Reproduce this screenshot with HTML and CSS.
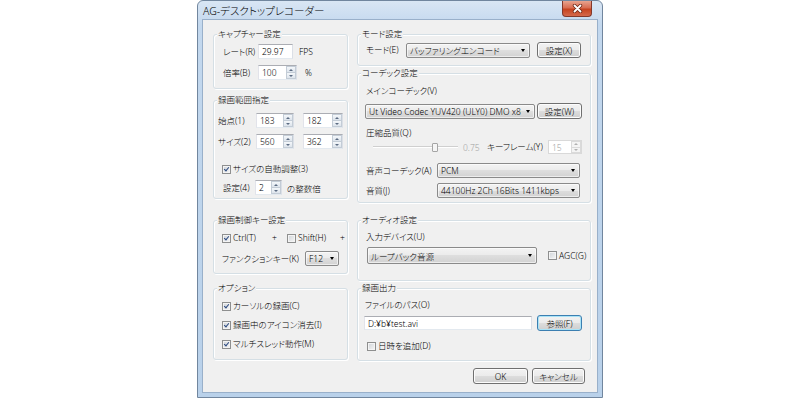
FILE: index.html
```html
<!DOCTYPE html>
<html lang="ja">
  <head>
    <meta charset="UTF-8">
    <title>AG-デスクトップレコーダー</title>
    <link rel="stylesheet" href="styles.css">
  </head>
  <body>
    <div class="page">
      <div class="window">
        <div class="titlebar">
          <span class="title">AG-デスクトップレコーダー</span>
          <span class="close-btn">
            <svg width="11" height="9" viewBox="0 0 11 9">
              <path d="M2.5 1.5 L8.5 7.5 M8.5 1.5 L2.5 7.5" stroke="#6b2414" stroke-width="3.4" stroke-linecap="round"/>
              <path d="M2.5 1.5 L8.5 7.5 M8.5 1.5 L2.5 7.5" stroke="#fff" stroke-width="1.9" stroke-linecap="round"/>
            </svg>
          </span>
        </div>

        <div class="client">
          <div class="columns">
            <!-- left column -->
            <div class="col col-left">
              <div class="group g-capture">
                <div class="group-title">キャプチャー設定</div>
                <div class="row cap-rate">
                  <span class="lbl cap-lbl">レート(R)</span>
                  <span class="textbox tb-rate">29.97</span>
                  <span class="unit-fps">FPS</span>
                </div>
                <div class="row cap-scale">
                  <span class="lbl cap-lbl">倍率(B)</span>
                  <span class="spin spin-scale"><span class="spin-val">100</span><span class="spin-btns"><i class="up"></i><i class="dn"></i></span></span>
                  <span class="unit-pct">%</span>
                </div>
              </div>

              <div class="group g-range">
                <div class="group-title">録画範囲指定</div>
                <div class="row rng-start">
                  <span class="lbl rng-lbl">始点(1)</span>
                  <span class="spin spin-x"><span class="spin-val">183</span><span class="spin-btns"><i class="up"></i><i class="dn"></i></span></span>
                  <span class="spin spin-y"><span class="spin-val">182</span><span class="spin-btns"><i class="up"></i><i class="dn"></i></span></span>
                </div>
                <div class="row rng-size">
                  <span class="lbl rng-lbl">サイズ(2)</span>
                  <span class="spin spin-x"><span class="spin-val">560</span><span class="spin-btns"><i class="up"></i><i class="dn"></i></span></span>
                  <span class="spin spin-y"><span class="spin-val">362</span><span class="spin-btns"><i class="up"></i><i class="dn"></i></span></span>
                </div>
                <div class="row check-row rng-auto">
                  <span class="check on"></span>
                  <span class="check-lbl">サイズの自動調整(3)</span>
                </div>
                <div class="row rng-mult">
                  <span class="lbl mult-lbl">設定(4)</span>
                  <span class="spin spin-mult"><span class="spin-val">2</span><span class="spin-btns"><i class="up"></i><i class="dn"></i></span></span>
                  <span class="mult-suffix">の整数倍</span>
                </div>
              </div>

              <div class="group g-keys">
                <div class="group-title">録画制御キー設定</div>
                <div class="row check-row key-mods">
                  <span class="key-item key-ctrl"><span class="check on"></span><span class="check-lbl">Ctrl(T)</span></span>
                  <span class="plus">+</span>
                  <span class="key-item key-shift"><span class="check"></span><span class="check-lbl">Shift(H)</span></span>
                  <span class="plus">+</span>
                </div>
                <div class="row key-func">
                  <span class="lbl func-lbl">ファンクションキー(K)</span>
                  <span class="combo combo-func"><span class="combo-text">F12</span><span class="combo-arrow"></span></span>
                </div>
              </div>

              <div class="group g-option">
                <div class="group-title">オプション</div>
                <div class="row check-row opt-row"><span class="check on"></span><span class="check-lbl">カーソルの録画(C)</span></div>
                <div class="row check-row opt-row"><span class="check on"></span><span class="check-lbl">録画中のアイコン消去(I)</span></div>
                <div class="row check-row opt-row"><span class="check on"></span><span class="check-lbl">マルチスレッド動作(M)</span></div>
              </div>
            </div>

            <!-- right column -->
            <div class="col col-right">
              <div class="group g-mode">
                <div class="group-title">モード設定</div>
                <div class="row mode-row">
                  <span class="lbl mode-lbl">モード(E)</span>
                  <span class="combo combo-mode"><span class="combo-text">バッファリングエンコード</span><span class="combo-arrow"></span></span>
                  <span class="btn btn-mode">設定(X)</span>
                </div>
              </div>

              <div class="group g-codec">
                <div class="group-title">コーデック設定</div>
                <div class="row text-row codec-main-lbl">メインコーデック(V)</div>
                <div class="row codec-main">
                  <span class="combo combo-main"><span class="combo-text">Ut Video Codec YUV420 (ULY0) DMO x86</span><span class="combo-arrow"></span></span>
                  <span class="btn btn-codec">設定(W)</span>
                </div>
                <div class="row text-row codec-q-lbl">圧縮品質(Q)</div>
                <div class="row codec-q">
                  <span class="slider"><span class="slider-track"></span><span class="slider-thumb"></span></span>
                  <span class="slider-val">0.75</span>
                  <span class="lbl kf-lbl">キーフレーム(Y)</span>
                  <span class="spin spin-kf disabled"><span class="spin-val">15</span><span class="spin-btns"><i class="up"></i><i class="dn"></i></span></span>
                </div>
                <div class="row codec-audio">
                  <span class="lbl ac-lbl">音声コーデック(A)</span>
                  <span class="combo combo-audio"><span class="combo-text">PCM</span><span class="combo-arrow"></span></span>
                </div>
                <div class="row codec-quality">
                  <span class="lbl ac-lbl">音質(J)</span>
                  <span class="combo combo-audio"><span class="combo-text">44100Hz 2Ch 16Bits 1411kbps</span><span class="combo-arrow"></span></span>
                </div>
              </div>

              <div class="group g-audio">
                <div class="group-title">オーディオ設定</div>
                <div class="row text-row audio-lbl">入力デバイス(U)</div>
                <div class="row audio-dev">
                  <span class="combo combo-dev"><span class="combo-text">ループバック音源</span><span class="combo-arrow"></span></span>
                  <span class="check agc-check"></span>
                  <span class="check-lbl">AGC(G)</span>
                </div>
              </div>

              <div class="group g-output">
                <div class="group-title">録画出力</div>
                <div class="row text-row out-lbl">ファイルのパス(O)</div>
                <div class="row out-path">
                  <span class="textbox tb-path">D:¥b¥test.avi</span>
                  <span class="btn btn-browse focused">参照(F)</span>
                </div>
                <div class="row check-row out-date">
                  <span class="check"></span>
                  <span class="check-lbl">日時を追加(D)</span>
                </div>
              </div>
            </div>
          </div>

          <div class="footer">
            <span class="btn btn-ok">OK</span>
            <span class="btn btn-cancel">キャンセル</span>
          </div>
        </div>
      </div>
    </div>
  </body>
</html>
```

FILE: styles.css
```css
* {
  box-sizing: border-box;
}

body {
  margin: 0;
  background: #fff;
  color: #000;
  font-family: "Noto Sans", "Noto Sans CJK JP", sans-serif;
  font-size: 8.5px;
  font-weight: 300;
  font-feature-settings: "palt";
}

.page {
  width: 800px;
  height: 400px;
  display: flex;
  justify-content: center;
}

/* window frame */
.window {
  width: 406px;
  height: 398px;
  display: flex;
  flex-direction: column;
  padding: 0 5px 5px;
  border: 1px solid #71869e;
  border-radius: 6px 6px 0 0;
  background: linear-gradient(#d9e6f4, #c3d8ee 24px, #b9d1ea);
}
.titlebar {
  flex: none;
  height: 19px;
  display: flex;
  align-items: flex-start;
}
.title {
  margin-top: 4px;
  font-size: 10.5px;
  line-height: 13px;
  white-space: nowrap;
}
.close-btn {
  margin-left: auto;
  margin-right: 5px;
  width: 30px;
  height: 16px;
  display: flex;
  align-items: center;
  justify-content: center;
  border: 1px solid #83382a;
  border-top: none;
  border-radius: 0 0 4px 4px;
  background: linear-gradient(#e8a48f, #d86d52 45%, #c6431f 55%, #d4694c);
}
.client {
  flex: 1;
  background: #f0f0f0;
  box-shadow: 0 0 0 1px #99b0ca;
  padding: 14px 6px 0 10px;
}

.columns {
  display: flex;
  gap: 9px;
}
.col {
  display: flex;
  flex-direction: column;
}
.col-left {
  width: 135px;
}
.col-right {
  width: 234px;
}

/* group boxes */
.group {
  border: 1px solid #d5dfe5;
  border-radius: 3px;
  box-shadow: inset 1px 1px 0 #fff, 1px 1px 0 #fff;
}
.group-title {
  width: fit-content;
  height: 12px;
  margin: -7px 0 0 3px;
  padding: 0 1px;
  background: #f0f0f0;
  line-height: 12px;
  white-space: nowrap;
}
.g-capture { height: 55px; }
.g-range { height: 99px; margin-top: 11px; }
.g-keys { height: 54px; margin-top: 21px; }
.g-option { height: 72px; margin-top: 14px; }
.g-mode { height: 32px; }
.g-codec { height: 130px; margin-top: 7px; }
.g-audio { height: 61px; margin-top: 17px; }
.g-output { height: 73px; margin-top: 7px; }

.row {
  display: flex;
  align-items: center;
  white-space: nowrap;
}
.row > * {
  flex: none;
}
.text-row,
.check-row {
  height: 12px;
  line-height: 12px;
}
.lbl {
  line-height: 12px;
}

/* controls */
.textbox {
  display: flex;
  align-items: center;
  height: 15px;
  padding-left: 3px;
  background: #fff;
  border: 1px solid;
  border-color: #abadb3 #dbdfe6 #e3e9ef #e2e3ea;
}

.spin {
  display: flex;
  height: 15px;
  background: #fff;
  border: 1px solid;
  border-color: #abadb3 #dbdfe6 #e3e9ef #e2e3ea;
}
.spin-val {
  flex: 1;
  display: flex;
  align-items: center;
  padding-left: 3px;
}
.spin-btns {
  width: 10px;
  display: flex;
  flex-direction: column;
}
.spin-btns i {
  flex: 1;
  display: flex;
  align-items: center;
  justify-content: center;
  border: 1px solid #c3ccd6;
  background: linear-gradient(#f4f7fa, #dde4ec);
}
.spin-btns i + i {
  border-top: none;
}
.spin-btns i::before {
  content: "";
  border-left: 2px solid transparent;
  border-right: 2px solid transparent;
}
.spin-btns .up::before {
  border-bottom: 2px solid #5b6b82;
}
.spin-btns .dn::before {
  border-top: 2px solid #5b6b82;
}
.spin.disabled {
  color: #a0a0a0;
  border-color: #d9d9d9;
}
.spin.disabled .spin-btns i {
  border-color: #dadada;
  background: #f4f4f4;
}
.spin.disabled .spin-btns i::before {
  border-bottom-color: #b0b0b0;
  border-top-color: #b0b0b0;
}

.combo {
  display: flex;
  align-items: center;
  height: 15px;
  padding-left: 3px;
  border: 1px solid #8a8a8a;
  border-radius: 2px;
  background: linear-gradient(#f3f3f3, #ebebeb 50%, #dedede 50%, #d2d2d2);
  box-shadow: inset 0 0 0 1px rgba(255, 255, 255, 0.6);
}
.combo-text {
  flex: 1;
  overflow: hidden;
  white-space: nowrap;
}
.combo-arrow {
  width: 13px;
  display: flex;
  justify-content: center;
}
.combo-arrow::before {
  content: "";
  border-left: 2.5px solid transparent;
  border-right: 2.5px solid transparent;
  border-top: 3px solid #000;
}

.btn {
  display: flex;
  align-items: center;
  justify-content: center;
  height: 16px;
  border: 1px solid #707070;
  border-radius: 3px;
  background: linear-gradient(#f2f2f2, #ebebeb 50%, #dddddd 50%, #cfcfcf);
  box-shadow: inset 0 0 0 1px #fcfcfc;
}
.btn.focused {
  border-color: #3c7fb1;
  box-shadow: inset 0 0 0 1px #a9e3f7;
}

.check {
  position: relative;
  width: 9px;
  height: 9px;
  border: 1px solid #8e8f8f;
  background: linear-gradient(135deg, #cfd3d8, #f6f6f6);
  box-shadow: inset 0 0 0 1px #f4f4f4;
}
.check.on::after {
  content: "";
  position: absolute;
  left: 2px;
  top: 0;
  width: 2px;
  height: 4px;
  border: solid #2c4a80;
  border-width: 0 1.5px 1.5px 0;
  transform: rotate(40deg);
}
.check-lbl {
  margin-left: 2px;
}

.slider {
  position: relative;
  width: 85px;
  height: 14px;
  display: flex;
  align-items: center;
}
.slider-track {
  flex: 1;
  height: 2px;
  border-top: 1px solid #cfcfcf;
  border-bottom: 1px solid #fff;
}
.slider-thumb {
  position: absolute;
  left: 59px;
  top: 3px;
  width: 6px;
  height: 9px;
  border: 1px solid #a5a5a5;
  border-radius: 1px;
  background: #f5f5f5;
}

/* capture */
.cap-rate { height: 15px; margin-top: 4px; padding-left: 9px; }
.cap-scale { height: 15px; margin-top: 6px; padding-left: 9px; }
.cap-lbl { width: 35px; }
.tb-rate { width: 35px; }
.spin-scale { width: 39px; }
.unit-fps { margin-left: 6px; }
.unit-pct { margin-left: 8px; }

/* range */
.rng-start { height: 15px; margin-top: 7px; padding-left: 4px; }
.rng-size { height: 15px; margin-top: 6px; padding-left: 4px; }
.rng-lbl { width: 38px; }
.spin-x { width: 38px; }
.spin-y { width: 40px; margin-left: 9px; }
.rng-auto { margin-top: 14px; padding-left: 8px; }
.rng-mult { height: 15px; margin-top: 5px; padding-left: 9px; }
.mult-lbl { width: 32px; }
.spin-mult { width: 27px; }
.mult-suffix { margin-left: 5px; }

/* keys */
.key-mods { margin-top: 6px; padding-left: 8px; }
.key-item { display: flex; align-items: center; }
.key-ctrl { width: 50px; }
.key-shift { width: 53px; }
.plus { width: 15px; }
.key-func { height: 15px; margin-top: 7px; padding-left: 8px; }
.func-lbl { width: 83px; }
.combo-func { width: 34px; }

/* options */
.opt-row { margin-top: 7px; padding-left: 8px; }
.opt-row:nth-child(2) { margin-top: 6px; }

/* mode */
.mode-row { height: 16px; margin-top: 2px; padding-left: 8px; }
.mode-lbl { width: 40px; }
.combo-mode { width: 124px; }
.btn-mode { width: 44px; margin-left: 7px; }

/* codec */
.codec-main-lbl { margin-top: 6px; padding-left: 8px; }
.codec-main { height: 16px; margin-top: 6px; padding-left: 7px; }
.combo-main { width: 170px; }
.btn-codec { width: 45px; margin-left: 2px; }
.codec-q-lbl { margin-top: 8px; padding-left: 8px; }
.codec-q { height: 14px; margin-top: 1px; padding-left: 15px; }
.slider-val { width: 24px; margin-left: 5px; color: #a0a0a0; }
.kf-lbl { width: 61px; }
.spin-kf { width: 34px; height: 14px; }
.codec-audio { height: 15px; margin-top: 9px; padding-left: 8px; }
.codec-quality { height: 15px; margin-top: 5px; padding-left: 8px; }
.ac-lbl { width: 71px; }
.combo-audio { width: 143px; }

/* audio */
.audio-lbl { margin-top: 5px; padding-left: 8px; }
.audio-dev { height: 17px; margin-top: 4px; padding-left: 9px; }
.combo-dev { width: 170px; height: 17px; }
.agc-check { margin-left: 11px; }

/* output */
.out-lbl { margin-top: 5px; padding-left: 7px; }
.out-path { height: 16px; margin-top: 4px; padding-left: 6px; }
.tb-path { width: 168px; height: 14px; }
.btn-browse { width: 45px; margin-left: 5px; }
.out-date { margin-top: 9px; padding-left: 9px; }

/* footer */
.footer {
  display: flex;
  justify-content: flex-end;
  gap: 4px;
  margin-top: 7px;
  padding-right: 6px;
}
.btn-ok { width: 55px; }
.btn-cancel { width: 53px; }
```
